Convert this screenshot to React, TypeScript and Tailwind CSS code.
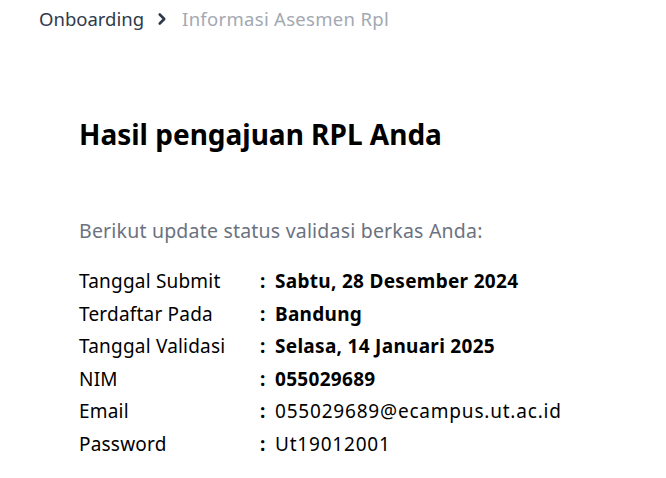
import { ChevronRight } from "lucide-react";

const rows = [
  { label: "Tanggal Submit", value: "Sabtu, 28 Desember 2024", bold: true },
  { label: "Terdaftar Pada", value: "Bandung", bold: true },
  { label: "Tanggal Validasi", value: "Selasa, 14 Januari 2025", bold: true },
  { label: "NIM", value: "055029689", bold: true },
  { label: "Email", value: "055029689@ecampus.ut.ac.id", bold: false },
  { label: "Password", value: "Ut19012001", bold: false },
];

export default function App() {
  return (
    <div className="min-h-screen w-full bg-white" style={{ fontFamily: '"Noto Sans", sans-serif' }}>
      {/* Breadcrumb */}
      <div className="flex items-center px-[39px] pt-[5px] text-[18.5px] leading-[28px]">
        <span className="text-[#2f3a4c]">Onboarding</span>
        <ChevronRight className="ml-[9px] mr-[11px] h-[18px] w-[18px] text-[#2f3a4c]" strokeWidth={3.5} />
        <span className="text-[#a3a8b2] tracking-[0.3px]">Informasi Asesmen Rpl</span>
      </div>

      <div className="px-[79px]">
        <h1 className="mt-[83px] text-[28px] font-bold leading-[36px] text-black">
          Hasil pengajuan RPL Anda
        </h1>
        <p className="mt-[66px] text-[19.5px] leading-[26px] tracking-[0.2px] text-[#6b7280]">
          Berikut update status validasi berkas Anda:
        </p>

        <div className="mt-[21px] flex flex-col">
          {rows.map((r) => (
            <div key={r.label} className="flex h-[32.6px] items-center text-[19px] text-black">
              <span className="w-[181px] tracking-[0.2px]">{r.label}</span>
              <span className="w-[15px] font-bold">:</span>
              <span className={r.bold ? "font-bold tracking-[0.3px]" : "tracking-[0.8px]"}>{r.value}</span>
            </div>
          ))}
        </div>
      </div>
    </div>
  );
}
